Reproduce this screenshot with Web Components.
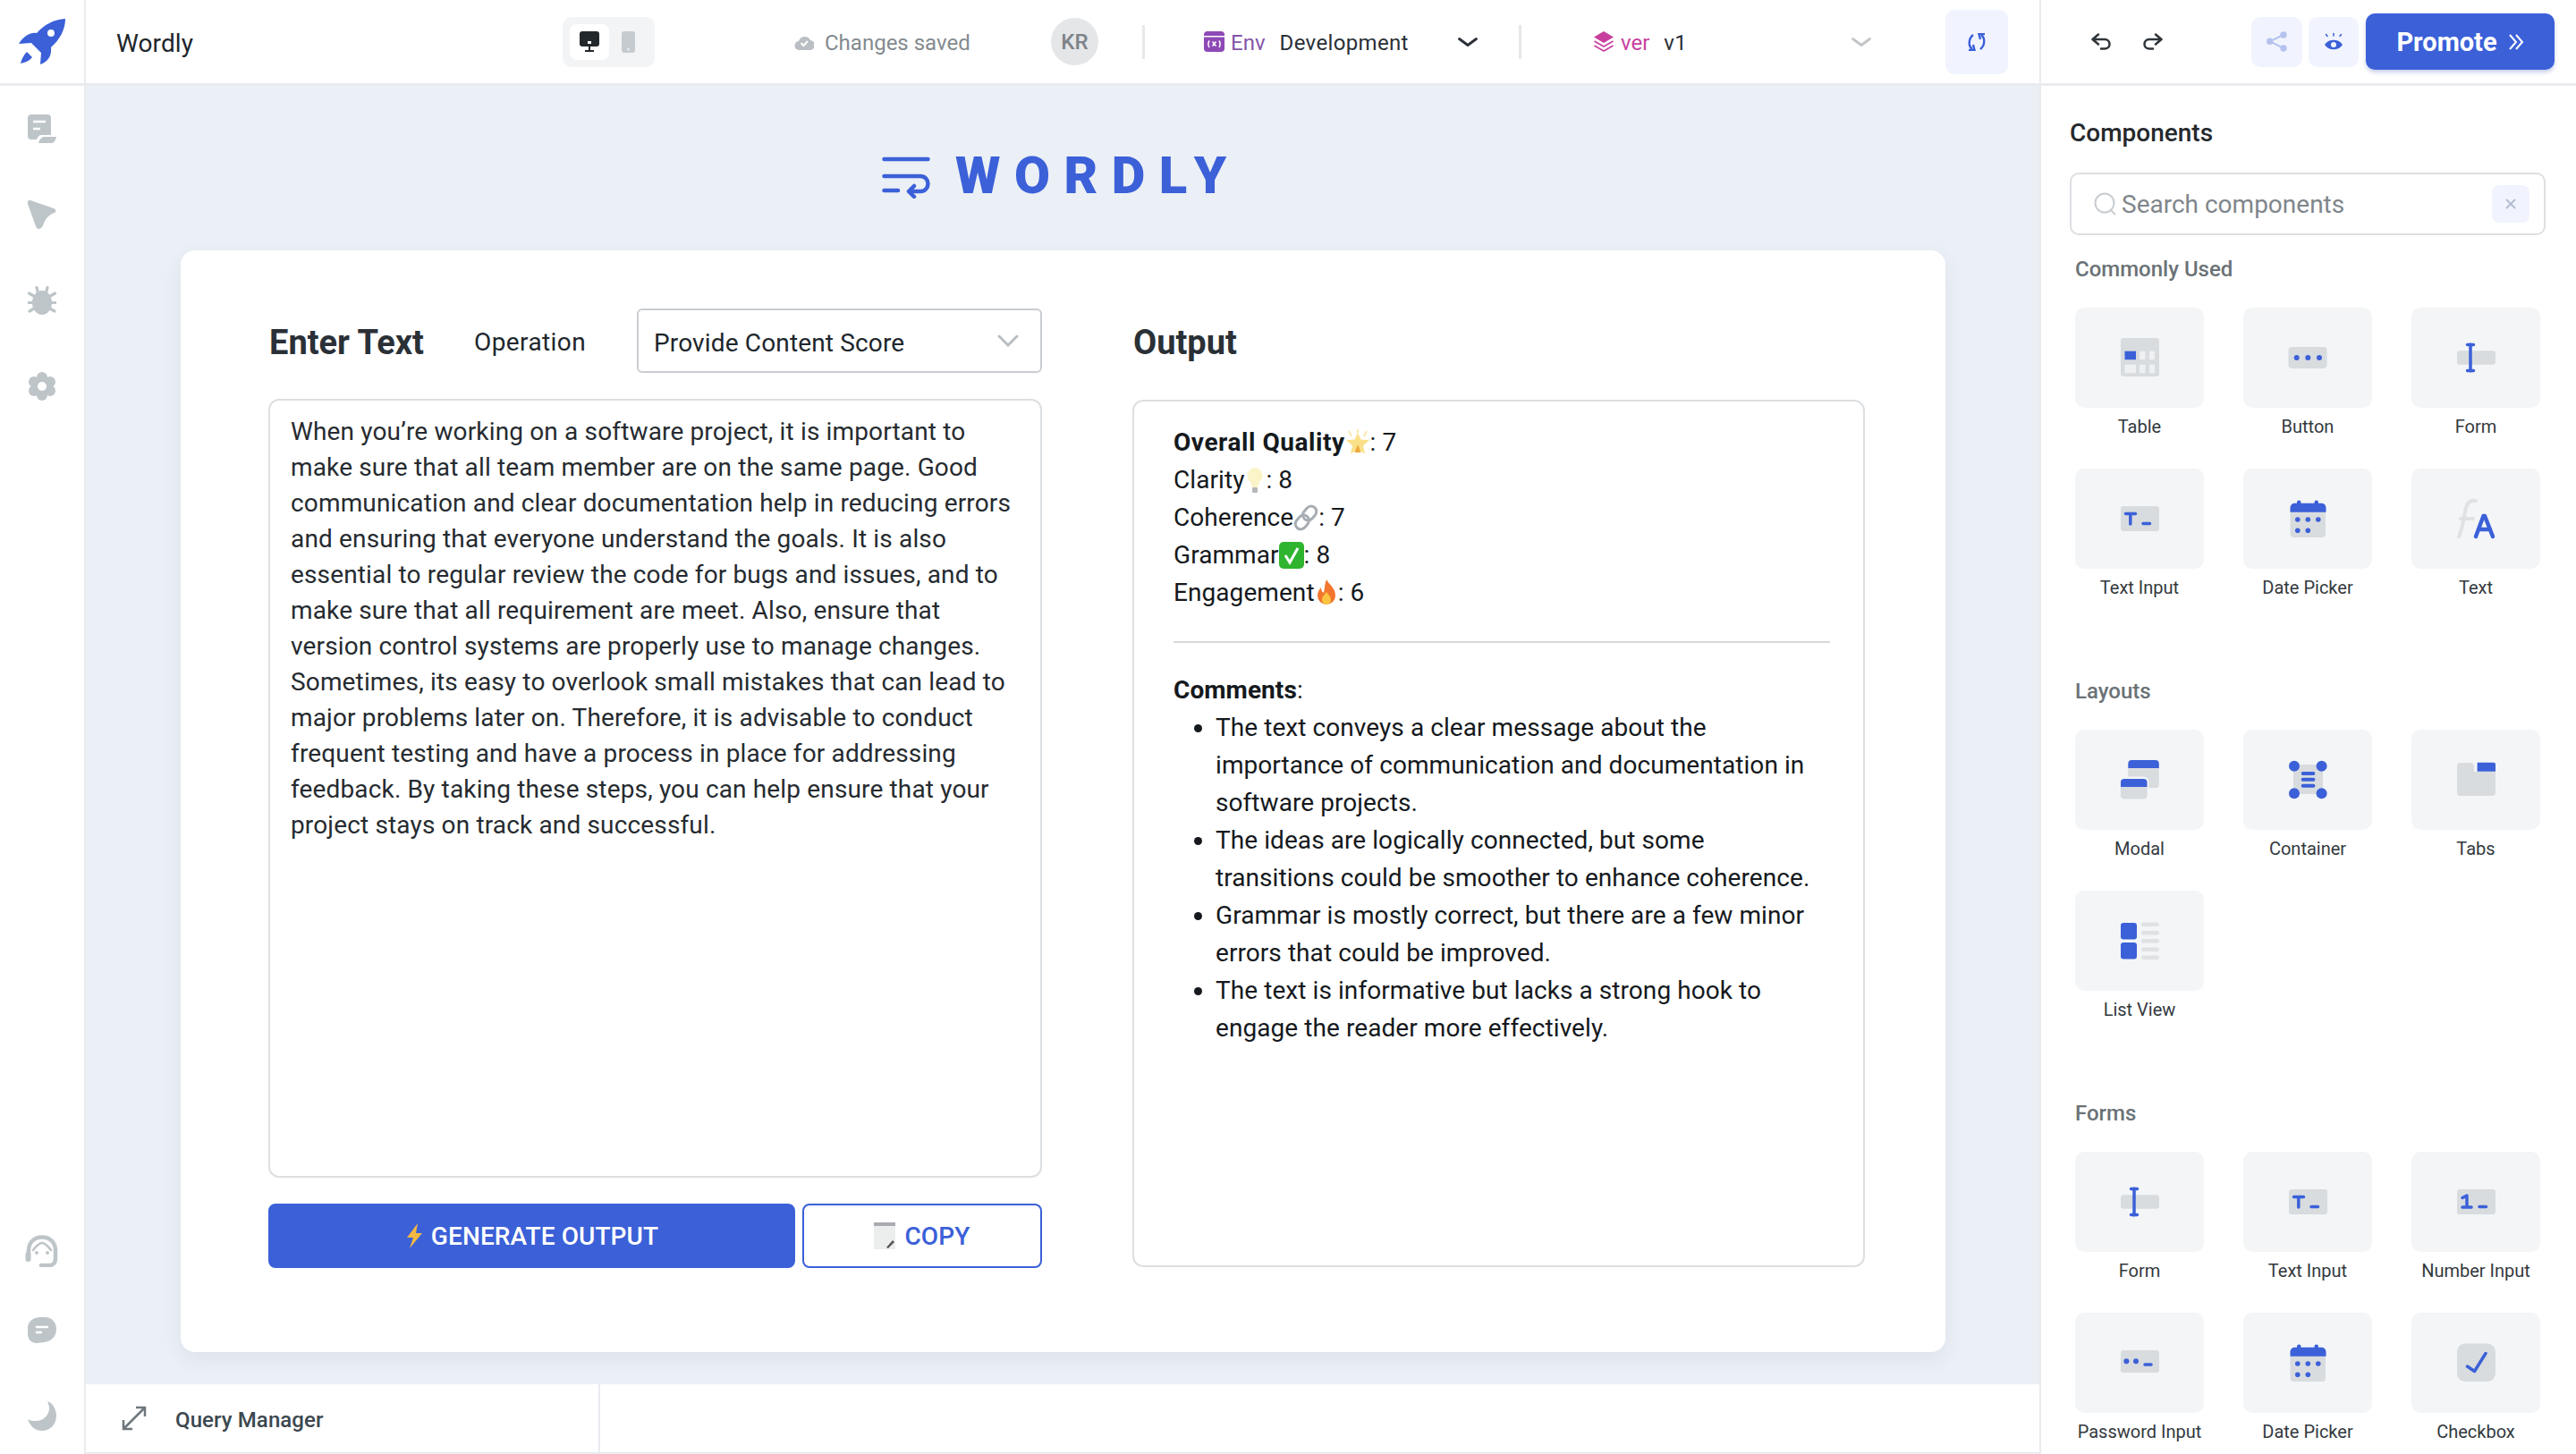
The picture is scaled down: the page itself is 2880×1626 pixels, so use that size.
<!DOCTYPE html>
<html>
<head>
<meta charset="utf-8">
<title>Wordly</title>
<style>
    html, body { margin: 0; height: 100%; }
    body {
        width: 2880px;
        height: 1626px;
        overflow: hidden;
        font-family: Roboto, "Liberation Sans", sans-serif;
        color: #1f2a33;
        background: #fff;
    }
</style>
</head>
<body>
<app-shell></app-shell>

<script>
const BLUE = '#3b60d8';
const GRAY = '#d8dcdf';
const RAIL = '#bec5c9';

// tile icons, all in a 48 box
const TILE_ICONS = {
    table: `<rect x="3" y="2" width="43" height="43" rx="3" fill="${GRAY}"/>
        <rect x="7.5" y="16.7" width="12.5" height="9.5" fill="${BLUE}"/>
        <rect x="24" y="16.7" width="6.5" height="9.5" fill="#eef0f2"/><rect x="35" y="16.7" width="6" height="9.5" fill="#eef0f2"/>
        <rect x="7.5" y="31.7" width="12.5" height="9.5" fill="#eef0f2"/><rect x="24" y="31.7" width="6.5" height="9.5" fill="#eef0f2"/><rect x="35" y="31.7" width="6" height="9.5" fill="#eef0f2"/>`,
    button: `<rect x="2.5" y="12" width="43" height="24" rx="4" fill="${GRAY}"/>
        <circle cx="11.7" cy="24" r="3" fill="${BLUE}"/><circle cx="24.3" cy="24" r="3" fill="${BLUE}"/><circle cx="37" cy="24" r="3" fill="${BLUE}"/>`,
    form: `<rect x="3" y="16.3" width="43" height="15.4" rx="3" fill="${GRAY}"/>
        <path d="M18 9v30M14.500 9.500h7M14.500 38.500h7" stroke="${BLUE}" stroke-width="3.500" stroke-linecap="round" fill="none"/>`,
    textInput: `<rect x="3" y="10" width="43" height="28" rx="3" fill="${GRAY}"/>
        <path d="M8.500 18.500h11M13.800 18.500v11.500M28 29.500h7.500" stroke="${BLUE}" stroke-width="3.500" stroke-linecap="round" fill="none"/>`,
    numberInput: `<rect x="3" y="10" width="43" height="28" rx="3" fill="${GRAY}"/>
        <path d="M9 19.500l5-2.500v13M9 30h10M28 29.500h7.500" stroke="${BLUE}" stroke-width="3.500" stroke-linecap="round" stroke-linejoin="round" fill="none"/>`,
    password: `<rect x="3" y="10" width="43" height="25" rx="3" fill="${GRAY}"/>
        <circle cx="9.400" cy="22.300" r="3" fill="${BLUE}"/><circle cx="20" cy="22.300" r="3" fill="${BLUE}"/>
        <path d="M30 26h7" stroke="${BLUE}" stroke-width="3.500" stroke-linecap="round"/>`,
    date: `<path d="M4.500 16h39.500v25a4 4 0 0 1-4 4h-31.500a4 4 0 0 1-4-4z" fill="${GRAY}"/>
        <path d="M4.500 16.700v-5a5 5 0 0 1 5-5h2.500v-1a2 2 0 0 1 4.500 0v1h15v-1a2 2 0 0 1 4.500 0v1h3.500a5 5 0 0 1 5 5v5z" fill="${BLUE}"/>
        <g fill="${BLUE}"><circle cx="12.800" cy="25" r="2.800"/><circle cx="24.300" cy="25" r="2.800"/><circle cx="35.800" cy="25" r="2.800"/><circle cx="12.800" cy="37.300" r="2.800"/><circle cx="24.300" cy="37.300" r="2.800"/></g>`,
    text: `<path d="M5 44C9 36 11 20 13 12c1.500-6 5-9 11-8M7 24h14" stroke="#dfe2e5" stroke-width="4" stroke-linecap="round" fill="none"/>
        <path d="M24 44l8.500-23h1.500l9 23M27 36h13" stroke="${BLUE}" stroke-width="4.500" stroke-linecap="round" stroke-linejoin="round" fill="none"/>`,
    modal: `<path d="M11.300 6a4 4 0 0 1 4-4h26.500a4 4 0 0 1 4 4v5h-34.500z" fill="${BLUE}"/>
        <path d="M11.300 11h34.500v18a4 4 0 0 1-4 4h-30.500z" fill="${GRAY}"/>
        <rect x="1" y="20.500" width="33.500" height="27" rx="6" fill="#f3f5f7"/>
        <path d="M3 27a4 4 0 0 1 4-4h21.500a4 4 0 0 1 4 4v5h-29.500z" fill="${BLUE}"/>
        <path d="M3 32h29.500v9.500a4 4 0 0 1-4 4h-21.500a4 4 0 0 1-4-4z" fill="${GRAY}"/>`,
    container: `<rect x="8" y="7" width="33" height="33" rx="3" fill="${GRAY}"/>
        <g fill="${BLUE}"><circle cx="9" cy="8.700" r="6"/><circle cx="39.600" cy="8.700" r="6"/><circle cx="9" cy="39.300" r="6"/><circle cx="39.600" cy="39.300" r="6"/>
        <rect x="16.700" y="15" width="15.700" height="4" rx="2"/><rect x="16.700" y="21.700" width="15.700" height="4" rx="2"/><rect x="16.700" y="28.700" width="15.700" height="4" rx="2"/></g>`,
    tabs: `<path d="M3 9a4 4 0 0 1 4-4h11a4 4 0 0 1 4 4v6h24v23a4 4 0 0 1-4 4h-35a4 4 0 0 1-4-4z" fill="${GRAY}"/>
        <path d="M25.600 4.700h18.400a2 2 0 0 1 2 2v8h-20.400z" fill="${BLUE}"/>`,
    list: `<rect x="3" y="4" width="18" height="18.500" rx="3" fill="${BLUE}"/><rect x="3" y="26" width="18" height="18.500" rx="3" fill="${BLUE}"/>
        <g fill="#dfe2e5"><rect x="26" y="3.500" width="20" height="4.500" rx="2"/><rect x="26" y="13" width="20" height="4.500" rx="2"/><rect x="26" y="22" width="20" height="4.500" rx="2"/><rect x="26" y="31.500" width="20" height="4.500" rx="2"/><rect x="26" y="40.500" width="20" height="4.500" rx="2"/></g>`,
    checkbox: `<rect x="3" y="2.500" width="43" height="42.500" rx="9" fill="${GRAY}"/>
        <path d="M14.500 28l8 5.500L35 13.500" stroke="${BLUE}" stroke-width="3.500" stroke-linecap="round" stroke-linejoin="round" fill="none"/>`
};

class AppShell extends HTMLElement {
    connectedCallback() {
        this.attachShadow({ mode: 'open' }).innerHTML = `
            <style>
                :host {
                    display: grid;
                    grid-template-columns: 96px 2184px 600px;
                    grid-template-rows: 96px 1530px;
                    width: 2880px;
                    height: 1626px;
                }
                top-bar { grid-column: 1 / 4; }
            </style>
            <top-bar></top-bar>
            <side-rail></side-rail>
            <main-area></main-area>
            <component-panel></component-panel>
        `;
    }
}

class TopBar extends HTMLElement {
    connectedCallback() {
        this.attachShadow({ mode: 'open' }).innerHTML = `
            <style>
                :host {
                    display: flex;
                    align-items: center;
                    height: 96px;
                    box-sizing: border-box;
                    border-bottom: 3px solid #e9ebef;
                    background: #fff;
                    font-size: 24px;
                }
                .logo {
                    width: 96px;
                    height: 100%;
                    box-sizing: border-box;
                    border-right: 2px solid #e9ebef;
                    flex: none;
                }
                .logo svg { display: block; }
                .title { width: 499px; margin-left: 34px; padding-top: 3px; font-size: 28px; letter-spacing: .1px; color: #20262c; flex: none; }
                .toggle {
                    width: 103px;
                    height: 56px;
                    box-sizing: border-box;
                    padding: 8px;
                    border-radius: 10px;
                    background: #f3f4f6;
                    display: flex;
                    align-items: stretch;
                    flex: none;
                }
                .toggle .on {
                    width: 44px;
                    background: #fff;
                    border-radius: 8px;
                    display: flex;
                    align-items: center;
                    justify-content: center;
                }
                .toggle .off { flex: 1; display: flex; align-items: center; justify-content: center; }
                .status {
                    width: 287px;
                    margin-left: 156px;
                    display: flex;
                    align-items: center;
                    gap: 12px;
                    color: #838a8f;
                    flex: none;
                }
                .status span, .tag, .value { padding-top: 3px; }
                .avatar {
                    width: 53px;
                    height: 53px;
                    border-radius: 50%;
                    background: #e4e6e8;
                    color: #7d8388;
                    font-weight: 500;
                    display: flex;
                    align-items: center;
                    justify-content: center;
                    flex: none;
                }
                .divider { width: 3px; height: 38px; background: #e6e8ea; flex: none; }
                .picker { display: flex; align-items: center; flex: none; position: relative; }
                .env { width: 306px; margin-left: 66px; }
                .ver { width: 311px; margin-left: 80px; }
                .picker .tag { margin-left: 7px; }
                .env .tag { color: #8455a8; }
                .ver .tag { color: #c83f9e; }
                .picker .value { color: #2a3036; margin-left: 16px; letter-spacing: .35px; }
                .picker svg.chev { margin-left: auto; }
                .icon-btn {
                    display: flex;
                    align-items: center;
                    justify-content: center;
                    background: #f1f4fe;
                    border-radius: 10px;
                    flex: none;
                }
                .sync { width: 70px; height: 72px; margin-left: 83px; }
                .right {
                    width: 600px;
                    height: 100%;
                    margin-left: 35px;
                    box-sizing: border-box;
                    border-left: 2px solid #e9ebef;
                    display: flex;
                    align-items: center;
                    flex: none;
                }
                .right > svg { flex: none; }
                .share { width: 57px; height: 56px; margin-left: 99px; }
                .eye { width: 56px; height: 56px; margin-left: 7px; }
                .promote {
                    width: 211px;
                    height: 63px;
                    margin-left: 8px;
                    border-radius: 10px;
                    background: ${BLUE};
                    color: #fff;
                    font-size: 29px;
                    font-weight: 700;
                    display: flex;
                    align-items: center;
                    justify-content: center;
                    gap: 12px;
                    box-shadow: 0 3px 4px rgba(40,70,170,.25);
                    flex: none;
                }
            </style>
            <div class="logo">
                <svg width="94" height="93" viewBox="0 0 94 93"><path fill="${BLUE}" fill-rule="evenodd" d="M73 21C60 22 50 27 41 37 34 36 27 40 21 49L35 48 46 59 45 72C54 69 58 62 57 53 67 44 73 33 73 21ZM57 33a4 4 0 1 1 0 8 4 4 0 0 1 0-8Z"/><path fill="${BLUE}" d="M30 58L36 64C33 68 28 70 23 71 24 66 27 61 30 58Z"/></svg>
            </div>
            <div class="title">Wordly</div>
            <div class="toggle">
                <div class="on"><svg width="22" height="23" viewBox="0 0 22 23"><rect width="22" height="17" rx="3" fill="#23282c"/><rect x="9" y="11" width="4" height="3" fill="#fff"/><path d="M11 17v5M6 22h10" stroke="#23282c" stroke-width="2"/></svg></div>
                <div class="off"><svg width="15" height="24" viewBox="0 0 15 24"><rect width="15" height="24" rx="3" fill="#c5cbcf"/><circle cx="7.500" cy="20" r="1.500" fill="#eceef0"/></svg></div>
            </div>
            <div class="status">
                <svg width="22" height="20" viewBox="0 0 22 20"><path fill="#b9bfc4" d="M6 19a5 5 0 0 1-1-10A7 7 0 0 1 18 8a5.500 5.500 0 0 1-1 11z"/><path d="M7.500 11l3 3 4.500-5" stroke="#fff" stroke-width="2" fill="none"/></svg>
                <span>Changes saved</span>
            </div>
            <div class="avatar">KR</div>
            <div class="divider" style="margin-left:49px"></div>
            <div class="picker env">
                <svg width="23" height="23" viewBox="0 0 23 23"><path fill="#8d49b5" d="M4 0h15a4 4 0 0 1 4 4v1H0V4a4 4 0 0 1 4-4z"/><path fill="#8d49b5" d="M0 6.500h23V19a4 4 0 0 1-4 4H4a4 4 0 0 1-4-4z"/><path d="M9.500 11.500l4 5M13.500 11.500l-4 5M6 10.500c-1.500 2.500-1.500 5 0 7.500M17 10.500c1.500 2.500 1.500 5 0 7.500" stroke="#fff" stroke-width="1.500" fill="none"/></svg>
                <span class="tag">Env</span><span class="value">Development</span>
                <svg class="chev" width="22" height="10" viewBox="0 0 22 10"><path d="M1.500 1.500L11 8.500l9.500-7" stroke="#2a3036" stroke-width="2.800" fill="none" stroke-linecap="round" stroke-linejoin="round"/></svg>
            </div>
            <div class="divider" style="margin-left:46px"></div>
            <div class="picker ver">
                <svg width="24" height="23" viewBox="0 0 24 23"><path fill="#c83f9e" d="M12 0l11 6.500L12 13 1 6.500z"/><path d="M1.500 11l10.500 6 10.500-6M1.500 16l10.500 6 10.500-6" stroke="#c83f9e" stroke-width="1.700" fill="none"/></svg>
                <span class="tag">ver</span><span class="value">v1</span>
                <svg class="chev" width="22" height="10" viewBox="0 0 22 10"><path d="M1.500 1.500L11 8.500l9.500-7" stroke="#c2c6c9" stroke-width="2.800" fill="none" stroke-linecap="round" stroke-linejoin="round"/></svg>
            </div>
            <div class="icon-btn sync">
                <svg width="20" height="20" viewBox="0 0 20 20" fill="none" stroke="${BLUE}" stroke-width="2.400"><path d="M6 2C1 6 0 14 5 18"/><path d="M1 19h6.500l-1.500-6"/><path d="M14 18c5-4 6-12 1-16"/><path d="M19 1h-6.500l1.500 6"/></svg>
            </div>
            <div class="right">
                <svg style="margin-left:56px" width="22" height="19" viewBox="0 0 22 19"><path d="M8 1.500L1.500 7 8 12.500M1.500 7H15c3.500 0 5.500 2.500 5.500 5.500s-2.500 5-5.500 5h-4" stroke="#2f353a" stroke-width="2.500" fill="none" stroke-linecap="round" stroke-linejoin="round"/></svg>
                <svg style="margin-left:36px" width="22" height="19" viewBox="0 0 22 19"><path d="M14 1.500L20.500 7 14 12.500M20.500 7H7C3.500 7 1.500 9.500 1.500 12.500s2.500 5 5.500 5h4" stroke="#2f353a" stroke-width="2.500" fill="none" stroke-linecap="round" stroke-linejoin="round"/></svg>
                <div class="icon-btn share">
                    <svg width="23" height="23" viewBox="0 0 23 23"><g fill="#b5c2ef"><circle cx="19" cy="4" r="3.700"/><circle cx="3.700" cy="11.300" r="3.700"/><circle cx="19" cy="19" r="3.700"/></g><path d="M19 4L3.700 11.300 19 19" stroke="#b5c2ef" stroke-width="2" fill="none"/></svg>
                </div>
                <div class="icon-btn eye">
                    <svg width="20" height="20" viewBox="0 0 20 20"><path fill="${BLUE}" fill-rule="evenodd" d="M0 13C4 6 16 6 20 13 16 20 4 20 0 13ZM10 10a3 3 0 1 0 0 6 3 3 0 0 0 0-6Z"/><path d="M10 0v3M1.500 1.500l1.500 2M18.500 1.500l-1.500 2" stroke="${BLUE}" stroke-width="1.500" stroke-linecap="round"/></svg>
                </div>
                <div class="promote">
                    <span>Promote</span>
                    <svg width="18" height="20" viewBox="0 0 18 20"><path d="M2 2l7 8-7 8M9 2l7 8-7 8" stroke="#fff" stroke-width="2" fill="none"/></svg>
                </div>
            </div>
        `;
    }
}

class SideRail extends HTMLElement {
    connectedCallback() {
        this.attachShadow({ mode: 'open' }).innerHTML = `
            <style>
                :host {
                    display: flex;
                    flex-direction: column;
                    align-items: center;
                    box-sizing: border-box;
                    border-right: 2px solid #e9ebef;
                    background: #fff;
                    padding-top: 32px;
                    padding-bottom: 25px;
                }
                .top { display: flex; flex-direction: column; gap: 64px; }
                .bottom { margin-top: auto; display: flex; flex-direction: column; align-items: center; }
                svg { display: block; }
            </style>
            <div class="top">
                <svg width="32" height="32" viewBox="0 0 32 32"><path fill="${RAIL}" d="M4 0h18a4 4 0 0 1 4 4v19H15c-2 0-4 2-5 5H4a4 4 0 0 1-4-4V4a4 4 0 0 1 4-4z"/><path d="M6 8h14M6 16h8" stroke="#fff" stroke-width="2.500"/><path fill="${RAIL}" d="M12 32c1-3 3-7 6-7h14c-1 4-3 7-5 7z"/></svg>
                <svg width="32" height="32" viewBox="0 0 32 32"><path fill="${RAIL}" d="M3 0L29 9c3 1 3 4 1 5C24 16 20 20 17 28 15 33 10 33 9 29L0 4C-1 1 1-1 3 0Z"/></svg>
                <svg width="32" height="32" viewBox="0 0 32 32"><ellipse cx="16" cy="18.500" rx="11" ry="13.500" fill="${RAIL}"/><path d="M10 1.500l1.500 6M22 1.500l-1.500 6M1.500 8l7 4M30.500 8l-7 4M1 18.500h7M31 18.500h-7M2 28l6-3.500M30 28l-6-3.500" stroke="${RAIL}" stroke-width="3.200" stroke-linecap="round"/></svg>
                <svg width="32" height="32" viewBox="0 0 32 32"><g fill="${RAIL}"><circle cx="16" cy="16" r="11"/><circle cx="16" cy="6" r="6"/><circle cx="16" cy="26" r="6"/><circle cx="7" cy="11" r="6"/><circle cx="25" cy="11" r="6"/><circle cx="7" cy="21" r="6"/><circle cx="25" cy="21" r="6"/></g><circle cx="16" cy="16" r="5" fill="#fff"/></svg>
            </div>
            <div class="bottom">
                <svg width="40" height="36" viewBox="0 0 40 36" fill="none" stroke="${RAIL}"><path d="M5 24V17C5 8 12 2.500 20 2.500S35 8 35 17v10c0 4-3 7-6 7H19" stroke-width="4.500" stroke-linecap="round"/><rect x="1.500" y="19" width="6" height="11" rx="3" fill="${RAIL}" stroke="none"/><path d="M10 17c3-4 6-8 10-8s7 4 10 8" stroke-width="2.500" stroke-linecap="round"/><circle cx="14" cy="20" r="2" fill="${RAIL}" stroke="none"/><circle cx="26" cy="20" r="2" fill="${RAIL}" stroke="none"/></svg>
                <svg style="margin-top:56px" width="32" height="29" viewBox="0 0 32 29"><path fill="${RAIL}" d="M14 0h5c8 0 13 6 13 13 0 9-6 14-14 15l-8 1C4 29 0 25 0 18v-6C0 5 6 0 14 0z"/><path d="M9 11h14M9 17h7" stroke="#fff" stroke-width="2.500"/></svg>
                <svg style="margin-top:65px" width="33" height="34" viewBox="0 0 33 34"><path fill="${RAIL}" d="M22 0C28 2 32 9 32 16 32 26 25 33 16 33 9 33 3 29 0 20 3 22 6 22 9 22 17 22 24 16 24 8 24 5 23 2 22 0Z"/></svg>
            </div>
        `;
    }
}

class MainArea extends HTMLElement {
    connectedCallback() {
        this.attachShadow({ mode: 'open' }).innerHTML = `
            <style>
                :host { display: flex; flex-direction: column; background: #ebeff6; min-width: 0; }
                .brand {
                    height: 168px;
                    padding: 16px 0 0 890px;
                    display: flex;
                    align-items: center;
                    gap: 28px;
                    color: ${BLUE};
                    font-size: 58px;
                    font-weight: 900;
                    letter-spacing: 15.500px;
                }
                .brand svg { flex: none; margin-top: 4px; }
                editor-card { margin-left: 106px; }
                query-bar { margin-top: auto; }
            </style>
            <div class="brand">
                <svg width="54" height="47" viewBox="0 0 54 47"><path d="M2.500 3h49M2.500 22H43c5 0 8.500 4 8.500 8.500S48 39 43 39H31M36 33l-6 6 6 6M2.500 38H18" stroke="${BLUE}" stroke-width="4.500" fill="none" stroke-linecap="round" stroke-linejoin="round"/></svg>
                <span>WORDLY</span>
            </div>
            <editor-card></editor-card>
            <query-bar></query-bar>
        `;
    }
}

class EditorCard extends HTMLElement {
    connectedCallback() {
        this.attachShadow({ mode: 'open' }).innerHTML = `
            <style>
                :host {
                    display: grid;
                    grid-template-columns: 865px 819px;
                    column-gap: 101px;
                    width: 1973px;
                    height: 1232px;
                    box-sizing: border-box;
                    padding: 65px 0 0 98px;
                    background: #fff;
                    border-radius: 16px;
                    box-shadow: 0 8px 22px rgba(60,70,90,.07);
                    font-size: 28px;
                    letter-spacing: .15px;
                }
                .head { display: flex; align-items: center; height: 72px; }
                h2 { margin: 0 0 0 1px; padding-top: 3px; font-size: 38px; font-weight: 700; color: #2a3036; width: 229px; letter-spacing: 0; }
                .op { width: 182px; padding-top: 3px; color: #20262c; letter-spacing: .4px; }
                .select {
                    width: 453px;
                    height: 72px;
                    box-sizing: border-box;
                    border: 2px solid #c9cdd1;
                    border-radius: 6px;
                    padding: 0 24px 0 17px;
                    display: flex;
                    align-items: center;
                    justify-content: space-between;
                    color: #20262c;
                }
                .select span { padding-top: 5px; }
                .input {
                    margin-top: 29px;
                    height: 871px;
                    box-sizing: border-box;
                    border: 2px solid #dcdfe2;
                    border-radius: 12px;
                    padding: 15px 23px;
                    line-height: 40px;
                    color: #262b30;
                    white-space: nowrap;
                }
                .actions { display: flex; gap: 8px; margin-top: 29px; }
                .actions div {
                    height: 72px;
                    box-sizing: border-box;
                    border-radius: 8px;
                    display: flex;
                    align-items: center;
                    justify-content: center;
                    gap: 8px;
                    font-weight: 500;
                    color: ${BLUE};
                    border: 2px solid ${BLUE};
                }
                .actions .gen { width: 589px; background: ${BLUE}; color: #fff; letter-spacing: .1px; gap: 9px; }
                .copy { width: 268px; }
                .out-head { height: 72px; display: flex; align-items: center; }
                .out-head h2 { width: auto; }
                output-box { margin-top: 30px; }
            </style>
            <div>
                <div class="head">
                    <h2>Enter Text</h2>
                    <div class="op">Operation</div>
                    <div class="select">
                        <span>Provide Content Score</span>
                        <svg width="24" height="14" viewBox="0 0 24 14"><path d="M2 2l10 10L22 2" stroke="#b9bec2" stroke-width="3" fill="none" stroke-linecap="round"/></svg>
                    </div>
                </div>
                <div class="input">When you’re working on a software project, it is important to<br>make sure that all team member are on the same page. Good<br>communication and clear documentation help in reducing errors<br>and ensuring that everyone understand the goals. It is also<br>essential to regular review the code for bugs and issues, and to<br>make sure that all requirement are meet. Also, ensure that<br>version control systems are properly use to manage changes.<br>Sometimes, its easy to overlook small mistakes that can lead to<br>major problems later on. Therefore, it is advisable to conduct<br>frequent testing and have a process in place for addressing<br>feedback. By taking these steps, you can help ensure that your<br>project stays on track and successful.</div>
                <div class="actions">
                    <div class="gen">
                        <svg width="20" height="28" viewBox="0 0 20 28"><path d="M14 0L2 16h7L5 28l14-17h-7z" fill="#f5b942"/></svg>
                        <span>GENERATE OUTPUT</span>
                    </div>
                    <div class="copy">
                        <svg width="26" height="30" viewBox="0 0 26 30"><rect width="24" height="30" fill="#eceded"/><rect width="24" height="4" fill="#a8acb0"/><path d="M14 28l7-8 2 2-7 7z" fill="#555"/></svg>
                        <span>COPY</span>
                    </div>
                </div>
            </div>
            <div>
                <div class="out-head"><h2>Output</h2></div>
                <output-box></output-box>
            </div>
        `;
    }
}

class OutputBox extends HTMLElement {
    connectedCallback() {
        this.attachShadow({ mode: 'open' }).innerHTML = `
            <style>
                :host {
                    display: block;
                    height: 970px;
                    box-sizing: border-box;
                    border: 2px solid #dcdfe2;
                    border-radius: 12px;
                    padding: 25px 37px 0 44px;
                    line-height: 42px;
                    color: #15191d;
                    letter-spacing: .07px;
                }
                .row { display: flex; align-items: center; height: 42px; white-space: pre; }
                .row b { letter-spacing: .55px; }
                b { font-weight: 700; }
                svg { flex: none; }
                hr { border: 0; height: 2px; background: #d6d9dc; margin: 33px 0 32px; }
                ul { margin: 0; padding: 0 0 0 47px; }
                li { white-space: nowrap; }
            </style>
            <div class="row"><b>Overall Quality</b><svg width="28" height="30" viewBox="0 0 28 30"><path fill="#fbe08a" d="M14 4l3.500 7.500L27 12l-7 6.500 2 9-8-5-8 5 2-9L1 12l9.500-.5z"/><path d="M4 2l3 6M24 2l-3 6M14 0v4" stroke="#fbe9ad" stroke-width="2"/><path fill="#eea93a" d="M14 17l3.500 9h-7z"/></svg><span>: 7</span></div>
            <div class="row"><span>Clarity</span><svg width="24" height="30" viewBox="0 0 24 30"><path fill="#fbf4c8" d="M12 1a9 9 0 0 1 5 16l-2 6H9l-2-6a9 9 0 0 1 5-16z"/><rect x="9" y="23" width="6" height="6" rx="1" fill="#b4b8bb"/></svg><span>: 8</span></div>
            <div class="row"><span>Coherence</span><svg width="28" height="30" viewBox="0 0 28 30"><g transform="rotate(40 14 15)" fill="none" stroke="#a7adb2" stroke-width="3"><rect x="8" y="0" width="12" height="17" rx="6"/><rect x="8" y="13" width="12" height="17" rx="6"/></g></svg><span>: 7</span></div>
            <div class="row"><span>Grammar</span><svg width="28" height="30" viewBox="0 0 28 30"><rect width="28" height="30" rx="5" fill="#2fb42f"/><path d="M7 15l5 8 9-16" stroke="#fff" stroke-width="3" fill="none"/></svg><span>: 8</span></div>
            <div class="row"><span>Engagement</span><svg width="26" height="30" viewBox="0 0 26 30"><path fill="#f2762e" d="M13 0c2 5 10 9 10 18a10 10 0 0 1-20 0c0-4 2-7 4-9 0 3 1 5 3 6 1-5 1-10 3-15z"/><path fill="#fbc440" d="M13 14c2 3 5 5 5 9a5 5 0 0 1-10 0c0-4 3-6 5-9z"/></svg><span>: 6</span></div>
            <hr>
            <div><b>Comments</b>:</div>
            <ul>
                <li>The text conveys a clear message about the<br>importance of communication and documentation in<br>software projects.</li>
                <li>The ideas are logically connected, but some<br>transitions could be smoother to enhance coherence.</li>
                <li>Grammar is mostly correct, but there are a few minor<br>errors that could be improved.</li>
                <li>The text is informative but lacks a strong hook to<br>engage the reader more effectively.</li>
            </ul>
        `;
    }
}

class QueryBar extends HTMLElement {
    connectedCallback() {
        this.attachShadow({ mode: 'open' }).innerHTML = `
            <style>
                :host {
                    display: flex;
                    height: 78px;
                    box-sizing: border-box;
                    background: #fff;
                    border-bottom: 2px solid #e9ebef;
                    font-size: 24px;
                    font-weight: 500;
                    color: #3b4850;
                }
                .tab {
                    width: 575px;
                    box-sizing: border-box;
                    border-right: 2px solid #e9ebef;
                    padding-left: 40px;
                    display: flex;
                    align-items: center;
                    gap: 32px;
                }
                .tab span { padding-top: 3px; letter-spacing: .1px; }
            </style>
            <div class="tab">
                <svg width="28" height="28" viewBox="0 0 28 28"><path d="M2 26L26 2M16 2h10v10M2 16v10h10" stroke="#6f777c" stroke-width="2.500" fill="none"/></svg>
                <span>Query Manager</span>
            </div>
        `;
    }
}

class ComponentPanel extends HTMLElement {
    connectedCallback() {
        this.attachShadow({ mode: 'open' }).innerHTML = `
            <style>
                :host {
                    display: block;
                    box-sizing: border-box;
                    background: #fff;
                    border-left: 2px solid #e9ebef;
                    padding: 33px 0 0 32px;
                    overflow: hidden;
                    min-width: 0;
                }
                .title { font-size: 28px; line-height: 40px; font-weight: 500; color: #25292d; }
                .search {
                    margin-top: 24px;
                    width: 532px;
                    height: 70px;
                    box-sizing: border-box;
                    border: 2px solid #dcdfe2;
                    border-radius: 10px;
                    padding: 0 16px 0 25px;
                    display: flex;
                    align-items: center;
                    gap: 5px;
                    font-size: 28px;
                    color: #7f868b;
                }
                .clear {
                    margin-left: auto;
                    width: 42px;
                    height: 42px;
                    border-radius: 8px;
                    background: #f1f4fe;
                    display: flex;
                    align-items: center;
                    justify-content: center;
                }
                .sections { padding: 15px 0 0 6px; display: flex; flex-direction: column; gap: 46px; }
            </style>
            <div class="title">Components</div>
            <div class="search">
                <svg width="26" height="28" viewBox="0 0 26 28"><circle cx="12" cy="13" r="10.500" fill="none" stroke="#c9cdd1" stroke-width="2"/><path d="M19 21l5 5" stroke="#c9cdd1" stroke-width="2"/></svg>
                <span>Search components</span>
                <div class="clear"><svg width="14" height="14" viewBox="0 0 14 14"><path d="M2 2l10 10M12 2L2 12" stroke="#b4bdd0" stroke-width="2"/></svg></div>
            </div>
            <div class="sections">
                <tile-group heading="Commonly Used" items="table:Table,button:Button,form:Form,textInput:Text Input,date:Date Picker,text:Text"></tile-group>
                <tile-group heading="Layouts" items="modal:Modal,container:Container,tabs:Tabs,list:List View"></tile-group>
                <tile-group heading="Forms" items="form:Form,textInput:Text Input,numberInput:Number Input,password:Password Input,date:Date Picker,checkbox:Checkbox"></tile-group>
            </div>
        `;
    }
}

class TileGroup extends HTMLElement {
    connectedCallback() {
        const items = this.getAttribute('items').split(',').map(s => s.split(':'));
        this.attachShadow({ mode: 'open' }).innerHTML = `
            <style>
                :host { display: block; height: 426px; }
                .heading {
                    height: 44px;
                    line-height: 47px;
                    margin-bottom: 22px;
                    font-size: 24px;
                    font-weight: 500;
                    color: #6b7276;
                }
                .grid {
                    display: grid;
                    grid-template-columns: repeat(3, 144px);
                    grid-auto-rows: 180px;
                    column-gap: 44px;
                }
            </style>
            <div class="heading">${this.getAttribute('heading')}</div>
            <div class="grid">
                ${items.map(([icon, label]) => `<comp-tile icon="${icon}" label="${label}"></comp-tile>`).join('')}
            </div>
        `;
    }
}

class CompTile extends HTMLElement {
    connectedCallback() {
        const icon = TILE_ICONS[this.getAttribute('icon')] || '';
        this.attachShadow({ mode: 'open' }).innerHTML = `
            <style>
                :host { display: block; }
                .box {
                    height: 112px;
                    border-radius: 10px;
                    background: #f3f5f7;
                    display: flex;
                    align-items: center;
                    justify-content: center;
                }
                .label {
                    margin-top: 9px;
                    line-height: 24px;
                    white-space: nowrap;
                    text-align: center;
                    font-size: 20px;
                    color: #33393e;
                }
            </style>
            <div class="box"><svg width="48" height="48" viewBox="0 0 48 48">${icon}</svg></div>
            <div class="label">${this.getAttribute('label')}</div>
        `;
    }
}

// children first so nothing renders against an unknown tag
customElements.define('comp-tile', CompTile);
customElements.define('tile-group', TileGroup);
customElements.define('component-panel', ComponentPanel);
customElements.define('query-bar', QueryBar);
customElements.define('output-box', OutputBox);
customElements.define('editor-card', EditorCard);
customElements.define('main-area', MainArea);
customElements.define('side-rail', SideRail);
customElements.define('top-bar', TopBar);
customElements.define('app-shell', AppShell);
</script>
</body>
</html>
